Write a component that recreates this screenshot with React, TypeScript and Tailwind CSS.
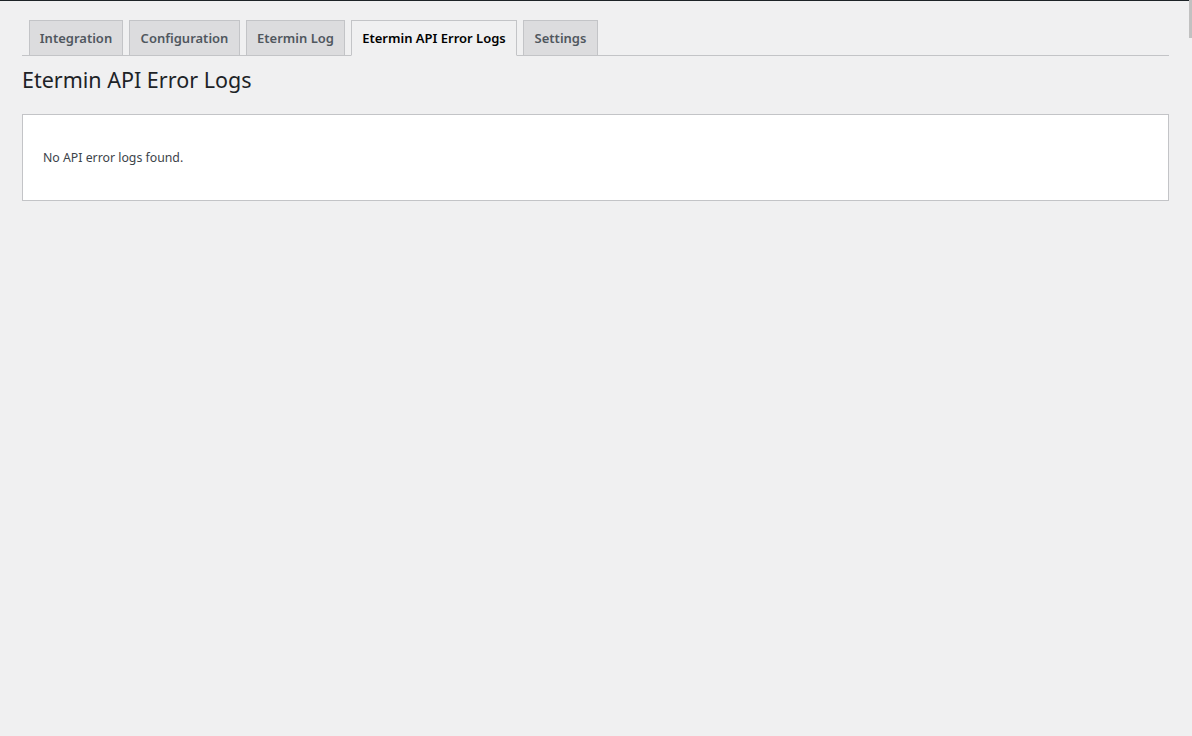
const TABS = [
  { label: "Integration", width: "w-[94px]" },
  { label: "Configuration", width: "w-[111px]" },
  { label: "Etermin Log", width: "w-[99px]" },
  { label: "Etermin API Error Logs", width: "w-[166px]", active: true },
  { label: "Settings", width: "w-[75px]" },
];

export default function App() {
  return (
    <div className="relative min-h-[736px] w-full bg-[#f0f0f1] font-['Noto_Sans','Open_Sans',sans-serif] text-[#3c434a]">
      {/* admin bar edge */}
      <div className="h-px w-[1189px] bg-[#1d2327]" />
      {/* scrollbar */}
      <div className="absolute right-0 top-0 h-[38px] w-[3px] bg-[#c1c1c1]" />

      <div className="ml-[22px] mr-[23px]">
        {/* Tabs */}
        <nav className="mt-[19px] flex items-end gap-[6px] border-b border-[#c3c4c7] pl-[7px]">
          {TABS.map((tab) => (
            <a
              key={tab.label}
              className={`-mb-px flex h-[36px] items-center justify-center border pt-[2px] text-[13px] font-semibold ${tab.width} ${
                tab.active
                  ? "border-[#c3c4c7] border-b-[#f0f0f1] bg-[#f0f0f1] text-[#000]"
                  : "border-[#c3c4c7] bg-[#dcdcde] text-[#50575e]"
              }`}
            >
              {tab.label}
            </a>
          ))}
        </nav>

        <h1 className="mt-[10px] text-[21.5px] leading-[28px] font-normal text-[#1d2327]">
          Etermin API Error Logs
        </h1>

        {/* Box */}
        <div className="mt-[20px] h-[87px] border border-[#c3c4c7] bg-white px-[20px] pt-[34px]">
          <p className="text-[12.3px] leading-[18px] text-[#3c434a]">No API error logs found.</p>
        </div>
      </div>
    </div>
  );
}
